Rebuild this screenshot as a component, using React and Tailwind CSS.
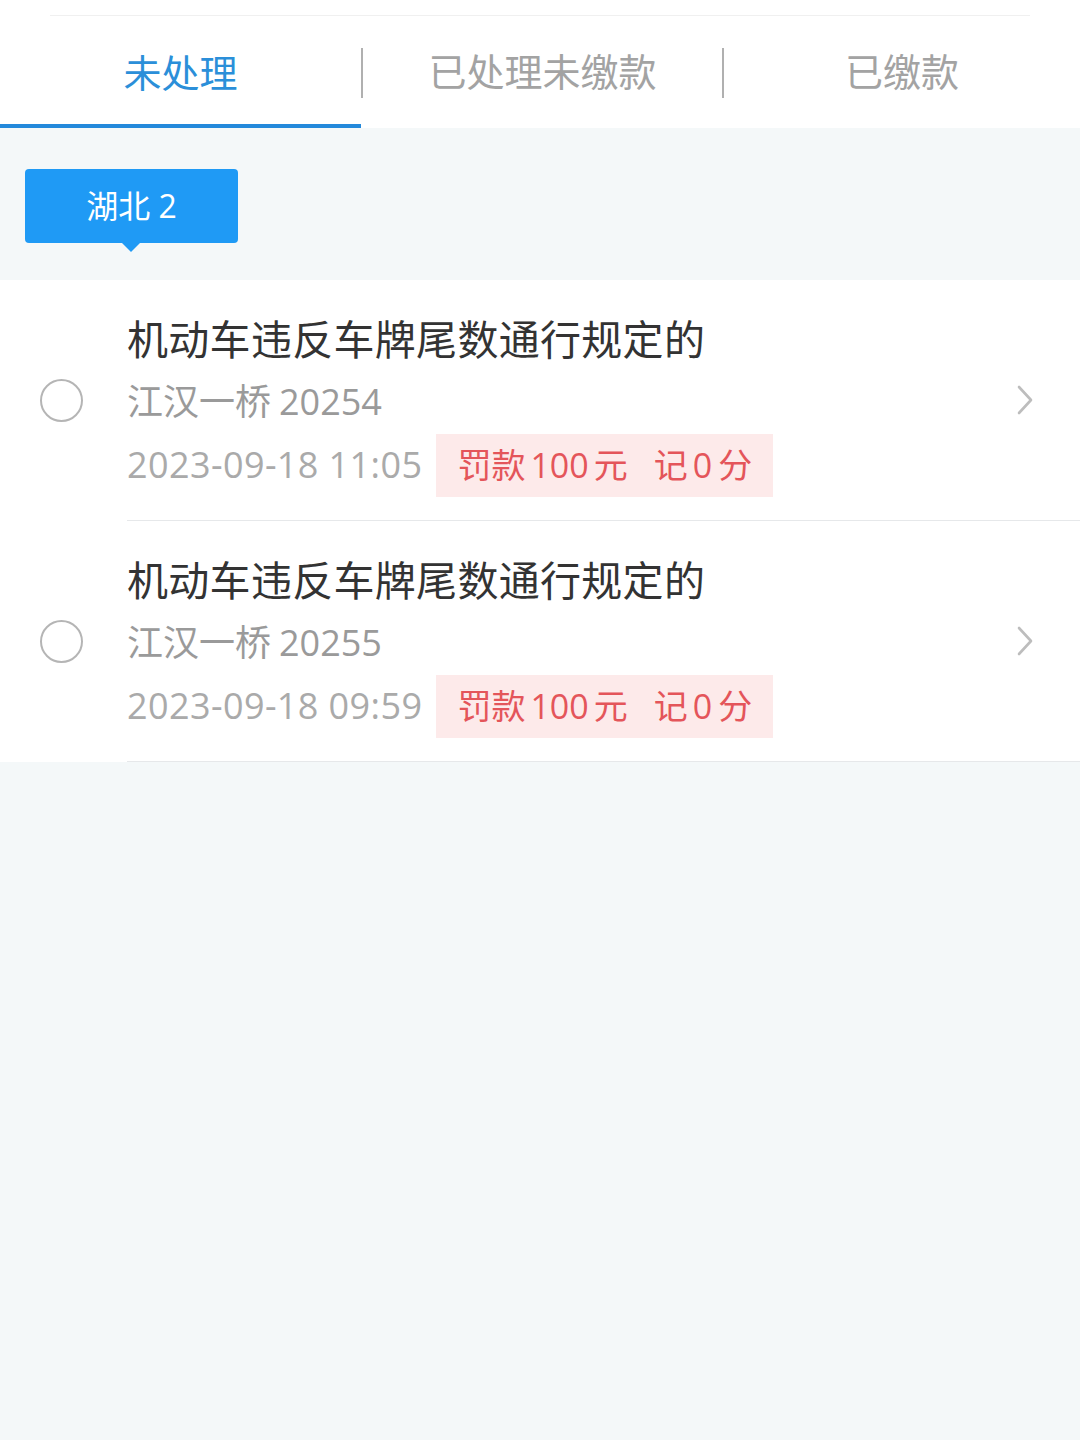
import React from "react";

const font = { fontFamily: '"Open Sans", "Noto Sans CJK SC", sans-serif' };

function Item({ place, time }) {
  return (
    <div className="flex items-center h-[241px]">
      <div className="w-[127px] h-full flex items-center justify-center shrink-0">
        <div className="w-[43px] h-[43px] rounded-full border-[2px] border-[#b5b5b5] ml-[-4px]" />
      </div>
      <div className="flex-1 h-full flex items-center border-b border-[#e6e8ea]">
        <div className="flex-1 flex flex-col pt-[4px]">
          <div className="h-[63px] flex items-center text-[41px] text-[#333333] leading-none tracking-[0.3px]">
            机动车违反车牌尾数通行规定的
          </div>
          <div className="h-[63px] flex items-center text-[36px] text-[#9a9a9a] leading-none">
            <span>江汉一桥</span>
            <span className="ml-[8px]">{place}</span>
          </div>
          <div className="h-[63px] flex items-center">
            <span className="text-[36px] text-[#aaaaaa] leading-none tracking-[0.4px]">{time}</span>
            <span className="ml-[14px] h-[63px] px-[21px] flex items-center bg-[#fdeaea] text-[34px] text-[#e4555a] leading-none">
              <span>罚款</span>
              <span className="ml-[5px] mr-[5px]">100</span>
              <span>元</span>
              <span className="ml-[26px]">记</span>
              <span className="ml-[5px] mr-[6px]">0</span>
              <span>分</span>
            </span>
          </div>
        </div>
        <div className="pr-[46px] pl-[10px] flex items-center">
          <svg width="18" height="30" viewBox="0 0 18 30" fill="none">
            <polyline points="3,2 15,15 3,28" stroke="#bdbdbd" strokeWidth="2.6" strokeLinecap="round" strokeLinejoin="round" />
          </svg>
        </div>
      </div>
    </div>
  );
}

export default function App() {
  return (
    <div className="w-[1080px] min-h-[1440px] bg-[#f4f8f9] flex flex-col" style={font}>
      <div className="bg-white h-[128px] flex flex-col">
        <div className="pt-[15px] px-[50px]">
          <div className="h-px bg-[#f0f0f0]" />
        </div>
        <div className="flex flex-1 items-stretch">
          <div className="w-[361px] flex items-center justify-center border-b-[4px] border-[#2389db]">
            <span className="text-[38px] text-[#2b8fd9] leading-none pt-[4px]">未处理</span>
          </div>
          <div className="self-center w-[2px] h-[50px] bg-[#b0b0b0] mt-[2px]" />
          <div className="w-[359px] flex items-center justify-center pb-[2px]">
            <span className="text-[38px] text-[#a3a3a3] leading-none">已处理未缴款</span>
          </div>
          <div className="self-center w-[2px] h-[50px] bg-[#b0b0b0] mt-[2px]" />
          <div className="flex-1 flex items-center justify-center pb-[2px]">
            <span className="text-[38px] text-[#a3a3a3] leading-none">已缴款</span>
          </div>
        </div>
      </div>

      <div className="h-[152px] pt-[41px] pl-[25px]">
        <div className="relative w-[213px] h-[74px] bg-[#1f9af5] rounded-[4px] flex items-center justify-center">
          <span className="text-[32px] text-white leading-none">湖北 2</span>
          <div className="absolute left-[97px] bottom-[-9px] w-0 h-0 border-l-[9px] border-r-[9px] border-t-[9px] border-l-transparent border-r-transparent border-t-[#1f9af5]" />
        </div>
      </div>

      <div className="bg-white">
        <Item place="20254" time="2023-09-18 11:05" />
        <Item place="20255" time="2023-09-18 09:59" />
      </div>
    </div>
  );
}
